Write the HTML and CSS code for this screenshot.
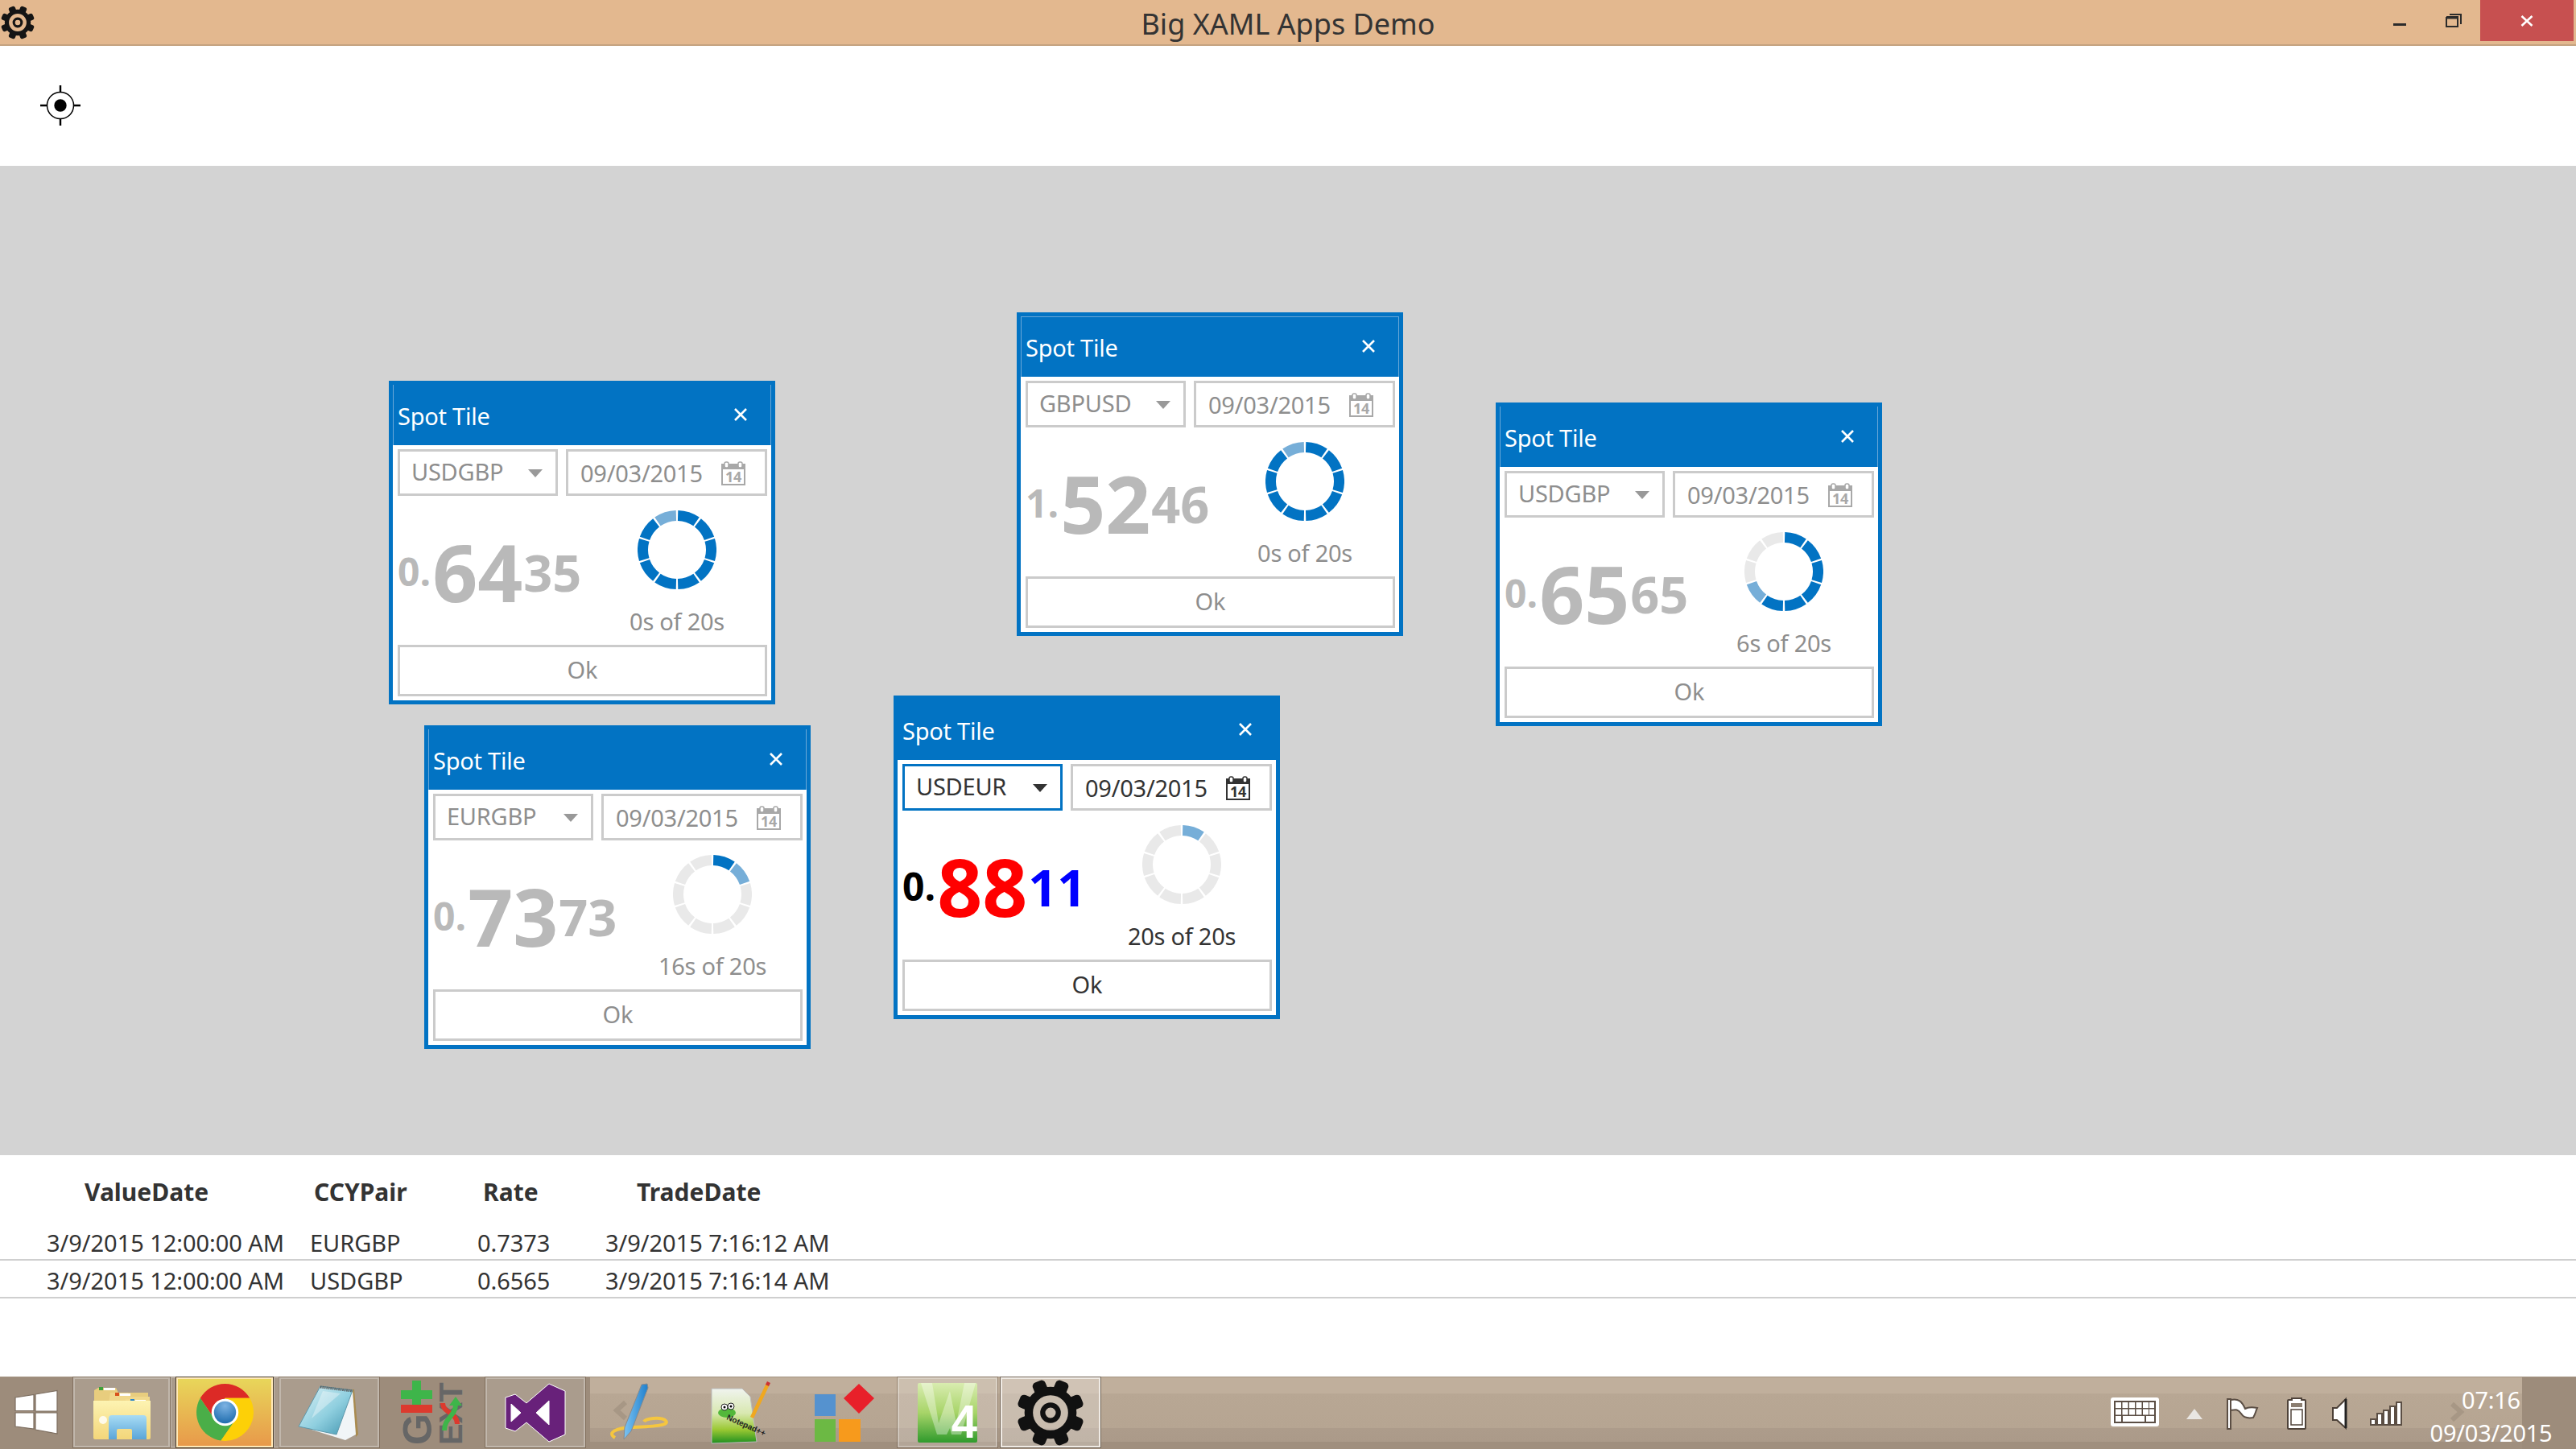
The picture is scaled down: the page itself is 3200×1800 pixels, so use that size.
FILE: index.html
```html
<!DOCTYPE html>
<html lang="en">
<head>
<meta charset="utf-8">
<title>Big XAML Apps Demo</title>
<link rel="stylesheet" href="styles.css">
</head>
<body>
<svg class="defs" aria-hidden="true">
  <defs>
    <circle id="seg" r="42.5" fill="none" stroke="currentColor" stroke-width="13" pathLength="360" stroke-dasharray="33 327" transform="rotate(-88.5)"/>
    <symbol id="gear" viewBox="-20 -20 40 40">
      <g fill="currentColor">
        <rect x="-4" y="-20" width="8" height="9" rx="2.4" transform="rotate(22.5)"/>
        <rect x="-4" y="-20" width="8" height="9" rx="2.4" transform="rotate(67.5)"/>
        <rect x="-4" y="-20" width="8" height="9" rx="2.4" transform="rotate(112.5)"/>
        <rect x="-4" y="-20" width="8" height="9" rx="2.4" transform="rotate(157.5)"/>
        <rect x="-4" y="-20" width="8" height="9" rx="2.4" transform="rotate(202.5)"/>
        <rect x="-4" y="-20" width="8" height="9" rx="2.4" transform="rotate(247.5)"/>
        <rect x="-4" y="-20" width="8" height="9" rx="2.4" transform="rotate(292.5)"/>
        <rect x="-4" y="-20" width="8" height="9" rx="2.4" transform="rotate(337.5)"/>
      </g>
      <circle r="12.9" fill="none" stroke="currentColor" stroke-width="5"/>
      <circle r="4.6" fill="none" stroke="currentColor" stroke-width="3"/>
    </symbol>
  </defs>
</svg>

<div class="app">
  <header class="titlebar">
    <svg class="titlegear"><use href="#gear"/></svg>
    <span class="apptitle">Big XAML Apps Demo</span>
    <div class="winctl">
      <svg class="winbtn" width="66" height="51" viewBox="0 0 66 51"><rect x="24" y="29" width="16" height="3" fill="#2b2b2b"/></svg>
      <svg class="winbtn" width="66" height="51" viewBox="0 0 66 51"><path d="M24 22h14v11h-14zM28 18h14v12" fill="none" stroke="#2b2b2b" stroke-width="2"/><rect x="24" y="20" width="15" height="3.5" fill="#2b2b2b"/></svg>
      <div class="closebtn"><svg width="16" height="14" viewBox="0 0 16 14"><path d="M1.5 1l13 12M14.5 1l-13 12" stroke="#fff" stroke-width="2.6"/></svg></div>
    </div>
  </header>

  <div class="toolbar">
    <svg class="target" width="50" height="50" viewBox="0 0 50 50">
      <circle cx="25" cy="25" r="16.5" fill="none" stroke="#000" stroke-width="1.5"/>
      <circle cx="25" cy="25" r="7.7" fill="#000"/>
      <path d="M25 0v8.5M25 41.5v8.5M0 25h8.5M41.5 25h8.5" stroke="#000" stroke-width="2.4"/>
    </svg>
  </div>

  <main class="canvas">
    <section class="tile off pos1">
      <div class="head"><span class="tiletitle">Spot Tile</span><svg class="x" viewBox="0 0 16 16"><path d="M1 1l14 14M15 1l-14 14"/></svg></div>
      <div class="inputs">
        <div class="combo"><span>USDGBP</span><i class="caret"></i></div>
        <div class="date"><span>09/03/2015</span><svg class="calicon" viewBox="0 0 30 30"><rect x="1" y="4" width="28" height="25" fill="none" stroke="currentColor" stroke-width="2"/><rect x="1" y="4" width="28" height="6" fill="currentColor"/><rect x="4" y="1" width="5" height="7" rx="2" fill="#fff" stroke="currentColor" stroke-width="1.5"/><rect x="21" y="1" width="5" height="7" rx="2" fill="#fff" stroke="currentColor" stroke-width="1.5"/><text x="15" y="26" text-anchor="middle" class="caltext">14</text></svg></div>
      </div>
      <div class="mid">
        <div class="price"><span class="pre">0.</span><span class="big">64</span><span class="pip">35</span></div>
        <div class="timer">
          <svg class="ring" viewBox="-49 -49 98 98">
            <use href="#seg" class="b" transform="rotate(0)"/><use href="#seg" class="b" transform="rotate(36)"/><use href="#seg" class="b" transform="rotate(72)"/><use href="#seg" class="b" transform="rotate(108)"/><use href="#seg" class="b" transform="rotate(144)"/><use href="#seg" class="b" transform="rotate(180)"/><use href="#seg" class="b" transform="rotate(216)"/><use href="#seg" class="b" transform="rotate(252)"/><use href="#seg" class="b" transform="rotate(288)"/><use href="#seg" class="p" transform="rotate(324)"/>
          </svg>
          <span class="count">0s of 20s</span>
        </div>
      </div>
      <div class="ok">Ok</div>
    </section>

    <section class="tile off pos2">
      <div class="head headtop"><span class="tiletitle">Spot Tile</span><svg class="x" viewBox="0 0 16 16"><path d="M1 1l14 14M15 1l-14 14"/></svg></div>
      <div class="inputs">
        <div class="combo"><span>GBPUSD</span><i class="caret"></i></div>
        <div class="date"><span>09/03/2015</span><svg class="calicon" viewBox="0 0 30 30"><rect x="1" y="4" width="28" height="25" fill="none" stroke="currentColor" stroke-width="2"/><rect x="1" y="4" width="28" height="6" fill="currentColor"/><rect x="4" y="1" width="5" height="7" rx="2" fill="#fff" stroke="currentColor" stroke-width="1.5"/><rect x="21" y="1" width="5" height="7" rx="2" fill="#fff" stroke="currentColor" stroke-width="1.5"/><text x="15" y="26" text-anchor="middle" class="caltext">14</text></svg></div>
      </div>
      <div class="mid">
        <div class="price"><span class="pre">1.</span><span class="big">52</span><span class="pip">46</span></div>
        <div class="timer">
          <svg class="ring" viewBox="-49 -49 98 98">
            <use href="#seg" class="b" transform="rotate(0)"/><use href="#seg" class="b" transform="rotate(36)"/><use href="#seg" class="b" transform="rotate(72)"/><use href="#seg" class="b" transform="rotate(108)"/><use href="#seg" class="b" transform="rotate(144)"/><use href="#seg" class="b" transform="rotate(180)"/><use href="#seg" class="b" transform="rotate(216)"/><use href="#seg" class="b" transform="rotate(252)"/><use href="#seg" class="b" transform="rotate(288)"/><use href="#seg" class="p" transform="rotate(324)"/>
          </svg>
          <span class="count">0s of 20s</span>
        </div>
      </div>
      <div class="ok">Ok</div>
    </section>

    <section class="tile off pos3">
      <div class="head"><span class="tiletitle">Spot Tile</span><svg class="x" viewBox="0 0 16 16"><path d="M1 1l14 14M15 1l-14 14"/></svg></div>
      <div class="inputs">
        <div class="combo"><span>USDGBP</span><i class="caret"></i></div>
        <div class="date"><span>09/03/2015</span><svg class="calicon" viewBox="0 0 30 30"><rect x="1" y="4" width="28" height="25" fill="none" stroke="currentColor" stroke-width="2"/><rect x="1" y="4" width="28" height="6" fill="currentColor"/><rect x="4" y="1" width="5" height="7" rx="2" fill="#fff" stroke="currentColor" stroke-width="1.5"/><rect x="21" y="1" width="5" height="7" rx="2" fill="#fff" stroke="currentColor" stroke-width="1.5"/><text x="15" y="26" text-anchor="middle" class="caltext">14</text></svg></div>
      </div>
      <div class="mid">
        <div class="price"><span class="pre">0.</span><span class="big">65</span><span class="pip">65</span></div>
        <div class="timer">
          <svg class="ring" viewBox="-49 -49 98 98">
            <use href="#seg" class="b" transform="rotate(0)"/><use href="#seg" class="b" transform="rotate(36)"/><use href="#seg" class="b" transform="rotate(72)"/><use href="#seg" class="b" transform="rotate(108)"/><use href="#seg" class="b" transform="rotate(144)"/><use href="#seg" class="b" transform="rotate(180)"/><use href="#seg" class="p" transform="rotate(216)"/><use href="#seg" class="g" transform="rotate(252)"/><use href="#seg" class="g" transform="rotate(288)"/><use href="#seg" class="g" transform="rotate(324)"/>
          </svg>
          <span class="count">6s of 20s</span>
        </div>
      </div>
      <div class="ok">Ok</div>
    </section>

    <section class="tile off pos4">
      <div class="head"><span class="tiletitle">Spot Tile</span><svg class="x" viewBox="0 0 16 16"><path d="M1 1l14 14M15 1l-14 14"/></svg></div>
      <div class="inputs">
        <div class="combo"><span>EURGBP</span><i class="caret"></i></div>
        <div class="date"><span>09/03/2015</span><svg class="calicon" viewBox="0 0 30 30"><rect x="1" y="4" width="28" height="25" fill="none" stroke="currentColor" stroke-width="2"/><rect x="1" y="4" width="28" height="6" fill="currentColor"/><rect x="4" y="1" width="5" height="7" rx="2" fill="#fff" stroke="currentColor" stroke-width="1.5"/><rect x="21" y="1" width="5" height="7" rx="2" fill="#fff" stroke="currentColor" stroke-width="1.5"/><text x="15" y="26" text-anchor="middle" class="caltext">14</text></svg></div>
      </div>
      <div class="mid">
        <div class="price"><span class="pre">0.</span><span class="big">73</span><span class="pip">73</span></div>
        <div class="timer">
          <svg class="ring" viewBox="-49 -49 98 98">
            <use href="#seg" class="b" transform="rotate(0)"/><use href="#seg" class="p" transform="rotate(36)"/><use href="#seg" class="g" transform="rotate(72)"/><use href="#seg" class="g" transform="rotate(108)"/><use href="#seg" class="g" transform="rotate(144)"/><use href="#seg" class="g" transform="rotate(180)"/><use href="#seg" class="g" transform="rotate(216)"/><use href="#seg" class="g" transform="rotate(252)"/><use href="#seg" class="g" transform="rotate(288)"/><use href="#seg" class="g" transform="rotate(324)"/>
          </svg>
          <span class="count">16s of 20s</span>
        </div>
      </div>
      <div class="ok">Ok</div>
    </section>

    <section class="tile on pos5">
      <div class="head"><span class="tiletitle">Spot Tile</span><svg class="x" viewBox="0 0 16 16"><path d="M1 1l14 14M15 1l-14 14"/></svg></div>
      <div class="inputs">
        <div class="combo focus"><span>USDEUR</span><i class="caret"></i></div>
        <div class="date"><span>09/03/2015</span><svg class="calicon" viewBox="0 0 30 30"><rect x="1" y="4" width="28" height="25" fill="none" stroke="currentColor" stroke-width="2"/><rect x="1" y="4" width="28" height="6" fill="currentColor"/><rect x="4" y="1" width="5" height="7" rx="2" fill="#fff" stroke="currentColor" stroke-width="1.5"/><rect x="21" y="1" width="5" height="7" rx="2" fill="#fff" stroke="currentColor" stroke-width="1.5"/><text x="15" y="26" text-anchor="middle" class="caltext">14</text></svg></div>
      </div>
      <div class="mid">
        <div class="price"><span class="pre">0.</span><span class="big">88</span><span class="pip">11</span></div>
        <div class="timer">
          <svg class="ring" viewBox="-49 -49 98 98">
            <use href="#seg" class="p" transform="rotate(0)"/><use href="#seg" class="g" transform="rotate(36)"/><use href="#seg" class="g" transform="rotate(72)"/><use href="#seg" class="g" transform="rotate(108)"/><use href="#seg" class="g" transform="rotate(144)"/><use href="#seg" class="g" transform="rotate(180)"/><use href="#seg" class="g" transform="rotate(216)"/><use href="#seg" class="g" transform="rotate(252)"/><use href="#seg" class="g" transform="rotate(288)"/><use href="#seg" class="g" transform="rotate(324)"/>
          </svg>
          <span class="count">20s of 20s</span>
        </div>
      </div>
      <div class="ok">Ok</div>
    </section>
  </main>

  <section class="blotter">
    <div class="thead"><span>ValueDate</span><span>CCYPair</span><span>Rate</span><span>TradeDate</span></div>
    <div class="trow"><span>3/9/2015 12:00:00 AM</span><span>EURGBP</span><span>0.7373</span><span>3/9/2015 7:16:12 AM</span></div>
    <div class="trow"><span>3/9/2015 12:00:00 AM</span><span>USDGBP</span><span>0.6565</span><span>3/9/2015 7:16:14 AM</span></div>
  </section>

  <footer class="taskbar">
    <svg class="wallchev left" width="18" height="22" viewBox="0 0 18 22"><path d="M15 1L4 11l11 10" fill="none" stroke="#a79785" stroke-width="6"/></svg>
    <svg class="wallchev right" width="18" height="22" viewBox="0 0 18 22"><path d="M3 1l11 10L3 21" fill="none" stroke="#a79785" stroke-width="6"/></svg>
    <div class="start">
      <svg width="56" height="56" viewBox="0 0 56 56">
        <g fill="#fff" stroke="#7d6e60" stroke-width="1.2"><path d="M2 10l23-3.5v20H2z"/><path d="M27 6l27-4.5v25.500H27z"/><path d="M2 29h23v20L2 46z"/><path d="M27 29h27v26l-27-5z"/></g>
      </svg>
    </div>
    <div class="slot stack"><div class="btn">
      <svg width="71" height="69" viewBox="0 0 71 69">
        <defs>
          <linearGradient id="fold" x1="0" y1="0" x2="0" y2="1"><stop offset="0" stop-color="#fdf3b2"/><stop offset="1" stop-color="#f3d67a"/></linearGradient>
          <linearGradient id="lib" x1="0" y1="0" x2="0" y2="1"><stop offset="0" stop-color="#a8dcf5"/><stop offset="1" stop-color="#5aa5d8"/></linearGradient>
        </defs>
        <path d="M6 4h22l3 6h37v10H1V7z" fill="#e8cd7e"/>
        <rect x="7" y="3" width="5" height="4" fill="#3ea13a"/><rect x="13" y="4" width="14" height="3" fill="#fff"/>
        <path d="M21 10h22l3 5h24v8H19z" fill="#f0d88c"/>
        <rect x="27" y="10" width="5" height="4" fill="#d9521c"/><rect x="33" y="11" width="13" height="3" fill="#fff"/>
        <path d="M40 18h23l8 4v3H39z" fill="#f3dc90"/>
        <rect x="46" y="18" width="5" height="4" fill="#2b86c9"/><rect x="52" y="19" width="13" height="3" fill="#fff"/>
        <path d="M0 20h71v46a2 2 0 0 1-2 2H2a2 2 0 0 1-2-2z" fill="url(#fold)"/>
        <path d="M21 42a4 4 0 0 1 4-4h39a4 4 0 0 1 4 4v26H50V57a2 2 0 0 0-2-2H33a2 2 0 0 0-2 2v11H21z" fill="url(#lib)" transform="translate(-2 0)"/>
        <circle cx="12" cy="44" r="5" fill="#fff" opacity=".8"/>
      </svg>
    </div></div>
    <div class="slot stack"><div class="btn hot">
      <svg width="71" height="71" viewBox="0 0 70 70">
        <defs><radialGradient id="cb" cx=".5" cy=".2" r=".9"><stop offset="0" stop-color="#7db3e3"/><stop offset="1" stop-color="#1565a8"/></radialGradient></defs>
        <path d="M4.7 17.5A35 35 0 0 1 65.3 17.5H35L20 40z" fill="#dc2a26"/>
        <path d="M4.7 17.5A35 35 0 0 0 30 69.6L45 48 20 40z" fill="#4aae48"/>
        <path d="M65.3 17.5A35 35 0 0 1 30 69.6L45 48 50 35 35 17.5z" fill="#fdd007"/>
        <circle cx="35" cy="35" r="16.5" fill="#fff"/>
        <circle cx="35" cy="35" r="13.5" fill="url(#cb)"/>
      </svg>
    </div></div>
    <div class="slot"><div class="btn">
      <svg width="76" height="70" viewBox="0 0 76 70">
        <defs><linearGradient id="pad" x1="0" y1="0" x2="1" y2="1"><stop offset="0" stop-color="#dff2f6"/><stop offset=".55" stop-color="#8fcfdf"/><stop offset="1" stop-color="#3f93ae"/></linearGradient></defs>
        <path d="M66 6l3 0 5 56-3 3z" fill="#a98b50"/>
        <path d="M16 56l51-49 4 55-13 7z" fill="#f1f5f7"/>
        <path d="M27 2L67 7 47 62 0 52z" fill="url(#pad)" stroke="#5d97aa"/>
        <path d="M27 3L67 8" stroke="#555" stroke-width="3" stroke-dasharray="1.5 1"/>
        <path d="M30 8L52 11 16 42z" fill="#fff" opacity=".35"/>
      </svg>
    </div></div>
    <div class="slot"><div class="btn plain">
      <svg width="78" height="80" viewBox="0 0 78 80">
        <path d="M14 0h11v12h14v11H25v15H14V23H0V12h14z" fill="#3eb54a"/>
        <rect x="0" y="30" width="39" height="10" fill="#dc3a2e"/>
        <text class="gitg" transform="translate(38 80) rotate(-90)">G</text>
        <text class="gitx" transform="translate(76 80) rotate(-90)">EXT</text>
        <path d="M52 28c0 12 18 12 18 26" fill="none" stroke="#dc3a2e" stroke-width="6"/>
        <path d="M54 62C54 46 68 44 68 30" fill="none" stroke="#3eb54a" stroke-width="6"/>
        <path d="M60 31h16l-8-11z" fill="#3eb54a"/>
      </svg>
    </div></div>
    <div class="slot"><div class="btn">
      <svg width="74" height="72" viewBox="0 0 74 72"><path d="M54 0l20 9v54l-20 9-28-24-14 11L0 55V17l12-4 14 11zM54 21L38 36l16 15zM7 25v22l12-11z" fill="#68217a" fill-rule="evenodd" stroke="#fff" stroke-width="1"/><path d="M7 25v22l12-11zM54 21L38 36l16 15z" fill="#fff"/></svg>
    </div></div>
    <div class="slot"><div class="btn plain">
      <svg width="74" height="74" viewBox="0 0 74 74">
        <defs><linearGradient id="pen" x1="0" y1="0" x2="1" y2="0"><stop offset="0" stop-color="#7cc3f2"/><stop offset="1" stop-color="#1f7fcc"/></linearGradient></defs>
        <path d="M8 68C-2 62 8 56 30 55 60 54 78 52 70 46 64 42 46 44 44 48" fill="none" stroke="#f5c63f" stroke-width="4"/>
        <path d="M19 70l1-15L41 2l7-1 1 5-21 54z" fill="url(#pen)" stroke="#8a8a8a" stroke-width="1"/>
      </svg>
    </div></div>
    <div class="slot"><div class="btn plain">
      <svg width="74" height="76" viewBox="0 0 74 76">
        <defs><linearGradient id="npp" x1="0" y1="0" x2="0" y2="1"><stop offset="0" stop-color="#f0f4ef"/><stop offset=".45" stop-color="#d8e8b0"/><stop offset=".75" stop-color="#9ac832"/><stop offset="1" stop-color="#1e8f20"/></linearGradient></defs>
        <path d="M0 8h38l10 10 8 56-56 2z" fill="url(#npp)" stroke="#bbb"/>
        <ellipse cx="19" cy="38" rx="11" ry="6" fill="#52b83a"/>
        <circle cx="16" cy="31" r="4" fill="#fff" stroke="#222"/><circle cx="24" cy="30" r="4" fill="#fff" stroke="#222"/>
        <circle cx="16" cy="31" r="1.5"/><circle cx="24" cy="30" r="1.5"/>
        <text class="npptext" transform="translate(18 46) rotate(24)">Notepad++</text>
        <path d="M50 44L70 2" stroke="#f0a820" stroke-width="4.5"/><path d="M69 4l2-4" stroke="#c33" stroke-width="4.5"/>
      </svg>
    </div></div>
    <div class="slot"><div class="btn plain">
      <svg width="74" height="72" viewBox="0 0 74 72">
        <rect x="0" y="13" width="26" height="27" fill="#5592cf"/>
        <rect x="0" y="44" width="26" height="28" fill="#6cb944"/>
        <rect x="30" y="44" width="27" height="28" fill="#f79a1c"/>
        <path d="M55 0l19 18-19 19-19-19z" fill="#e8202a"/>
      </svg>
    </div></div>
    <div class="slot"><div class="btn lite">
      <svg width="74" height="74" viewBox="0 0 74 74">
        <defs><linearGradient id="w4" x1="0" y1="0" x2="0" y2="1"><stop offset="0" stop-color="#d9ecb0"/><stop offset=".5" stop-color="#a7d468"/><stop offset="1" stop-color="#2f9a2c"/></linearGradient></defs>
        <rect width="74" height="74" rx="2" fill="url(#w4)"/>
        <path d="M4 0h14l8 50L40 10l8 40L58 0h14L54 64H42l-2-8-4 8H24z" fill="#fff" opacity=".35"/>
        <text class="w4num" x="74" y="68" text-anchor="end">4</text>
      </svg>
    </div></div>
    <div class="slot"><div class="btn gearbtn">
      <svg class="biggear"><use href="#gear"/></svg>
    </div></div>

    <div class="tray">
      <svg class="tk" width="60" height="36" viewBox="0 0 60 36"><rect width="60" height="36" rx="3" fill="#fff"/><rect x="4" y="4" width="52" height="28" fill="#5b4e44"/><path fill="#fff" d="M6 6h7v7H6zM14.5 6h7v7h-7zM23 6h7v7h-7zM31.5 6h7v7h-7zM40 6h7v7h-7zM48 6h6v7h-6zM6 14.5h7v7H6zM14.5 14.5h7v7h-7zM23 14.5h7v7h-7zM31.5 14.5h7v7h-7zM40 14.5h7v7h-7zM48 14.5h6v7h-6zM6 23h7v7H6zM15 23h27v7H15zM44 23h10v7H44z"/></svg>
      <svg class="tk ml-tri" width="20" height="13" viewBox="0 0 20 13"><path d="M10 0l10 13H0z" fill="#e9e6e2"/></svg>
      <svg class="tk ml-flag" width="40" height="40" viewBox="0 0 40 40"><path d="M2 2v37h4V2z" fill="#fff" stroke="#5b4e44" stroke-width="2"/><path d="M6 3c10-2 14 2 18 11 4-2 10-2 15-1-2 4-2 7-5 12-6 1-12 0-15-5-4-6-7-5-13-4z" fill="#fff" stroke="#5b4e44" stroke-width="2"/></svg>
      <svg class="tk ml-bat" width="24" height="40" viewBox="0 0 24 40"><path d="M6 1h12v2h4a1 1 0 0 1 1 1v34a1 1 0 0 1-1 1H2a1 1 0 0 1-1-1V4a1 1 0 0 1 1-1h4z" fill="#fff" stroke="#4f433a" stroke-width="2"/><rect x="5" y="7" width="14" height="5" fill="#8a7d70"/><rect x="5" y="15" width="14" height="19" fill="#fff" stroke="#4f433a" stroke-width="1.5"/></svg>
      <svg class="tk ml-spk" width="20" height="40" viewBox="0 0 20 40"><path d="M18 2v36l-11-10H2V13h5z" fill="#fff" stroke="#4c4037" stroke-width="2"/><path d="M18 2v36" stroke="#222" stroke-width="3"/></svg>
      <svg class="tk ml-sig" width="40" height="30" viewBox="0 0 40 30"><path d="M1 22h6v7H1zM9 15h6v14H9zM17 11h6v18h-6zM25 6h6v23h-6zM33 1h6v28h-6z" fill="#fff" stroke="#5b4e44" stroke-width="2"/></svg>
      <div class="clock"><span>07:16</span><span>09/03/2015</span></div>
    </div>
  </footer>
</div>
</body>
</html>
```

FILE: styles.css
```css
* { box-sizing: border-box; }
html, body { margin: 0; padding: 0; }
body { font-family: "Noto Sans", "Open Sans", sans-serif; color: #333; background: #fff; }
.defs { position: absolute; width: 0; height: 0; overflow: hidden; }
.caltext { font: 700 18px "Noto Sans", sans-serif; fill: currentColor; }

.app { width: 3200px; height: 1800px; display: flex; flex-direction: column; overflow: hidden; }

/* Title bar */
.titlebar { flex: 0 0 57px; background: #e3b88f; border-bottom: 2px solid #c4a27f; position: relative; display: flex; justify-content: center; align-items: center; }
.titlegear { position: absolute; left: 1px; top: 7px; width: 42px; height: 42px; color: #151515; }
.apptitle { font-size: 36px; line-height: 55px; color: #333; position: relative; top: 2px; }
.winctl { position: absolute; right: 3px; top: 0; display: flex; }
.winbtn { display: block; }
.closebtn { width: 116px; height: 51px; background: #c75050; display: flex; align-items: center; justify-content: center; }

/* Toolbar */
.toolbar { flex: 0 0 149px; background: #fff; padding: 49px 0 0 50px; }
.target { display: block; }

/* Canvas */
.canvas { flex: 1 1 auto; background: #d3d3d3; position: relative; }
.tile { position: absolute; width: 480px; height: 402px; border: 5px solid #0273c3; background: #fff; display: flex; flex-direction: column; }
.pos1 { left: 483px; top: 267px; }
.pos2 { left: 1263px; top: 182px; }
.pos3 { left: 1858px; top: 294px; }
.pos4 { left: 527px; top: 695px; }
.pos5 { left: 1110px; top: 658px; }

.head { flex: 0 0 75px; background: #0273c3; position: relative; padding: 19px 0 0 6px; }
.off .head { box-shadow: inset 1px 0 0 #6aa8d8, inset -1px 0 0 #6aa8d8; }
.off .headtop { box-shadow: inset 1px 1px 0 #6aa8d8, inset -1px 0 0 #6aa8d8; }
.tiletitle { display: block; font-size: 29px; line-height: 40px; color: #fff; letter-spacing: -.25px; }
.x { position: absolute; right: 30px; top: 29px; width: 16px; height: 16px; fill: none; stroke: #fff; stroke-width: 2.6; }

.inputs { display: flex; gap: 10px; padding: 5px 5px 0 6px; }
.combo, .date { height: 58px; border: 3px solid #cbcbcb; display: flex; align-items: center; font-size: 29px; letter-spacing: -.25px; position: relative; }
.combo { flex: 0 0 199px; padding-left: 14px; }
.date { flex: 0 0 250px; padding-left: 15px; }
.combo span { position: relative; top: -2px; }
.focus { border-color: #0273c3; }
.caret { position: absolute; left: 159px; top: 22px; width: 0; height: 0; border-left: 9px solid transparent; border-right: 9px solid transparent; border-top: 10px solid currentColor; }
.calicon { position: absolute; right: 24px; top: 12px; width: 30px; height: 30px; }

.mid { flex: 0 0 185px; display: flex; }
.price { flex: 0 0 235px; display: flex; align-items: flex-start; padding-left: 6px; font-family: "Open Sans", "Noto Sans", sans-serif; font-weight: 700; }
.pre { font-size: 48px; line-height: 48px; margin-top: 70px; }
.big { font-size: 98px; line-height: 98px; margin-top: 45px; margin-left: 2px; }
.pip { font-size: 63px; line-height: 63px; margin-top: 63px; margin-left: 1px; }

.timer { flex: 0 0 236px; display: flex; flex-direction: column; align-items: center; padding-top: 18px; }
.ring { width: 98px; height: 98px; display: block; }
.count { font-size: 29px; line-height: 40px; margin-top: 20px; letter-spacing: -.25px; }
.b { color: #0273c3; }
.p { color: #76aed8; }
.g { color: #e9e9e9; }

.ok { height: 64px; margin: 0 5px 0 6px; padding-bottom: 4px; border: 3px solid #cbcbcb; display: flex; align-items: center; justify-content: center; font-size: 29px; }

.off .combo, .off .date, .off .count, .off .ok { color: #8e8e8e; }
.off .price { color: #b9b9b9; }
.off .calicon { color: #a8a8a8; }
.off .caret { color: #999; }
.on .combo, .on .date, .on .count, .on .ok { color: #333; }
.on .pre { color: #000; }
.on .big { color: #f00; }
.on .pip { color: #00f; }

/* Blotter */
.blotter { flex: 0 0 275px; background: #fff; }
.thead { height: 84px; display: grid; grid-template-columns: 285px 210px 191px 1fr; padding: 26px 0 0 105px; font-size: 30px; line-height: 40px; font-weight: 700; }
.trow { height: 47px; display: grid; grid-template-columns: 327px 208px 159px 1fr; padding: 6px 0 0 58px; border-bottom: 2px solid #cfcfcf; font-size: 29px; line-height: 38px; letter-spacing: -.05px; }

/* Taskbar */
.taskbar { flex: 0 0 88px; display: flex; position: relative; background: linear-gradient(180deg, #c0af9c 0, #c0af9c 20px, #b8a794 20px, #b6a592 63px, #ad9c8b 63px, #ab9a89 80px, #a08f7e 80px) 733px 0 / 2400px 100% no-repeat, #9d8c7b; border-top: 1px solid #a39381; }
.taskbar svg { overflow: visible; }
.wallchev { position: absolute; top: 30px; }
.wallchev.left { left: 762px; }
.wallchev.right { left: 3043px; top: 32px; }
.start { flex: 0 0 91px; padding: 15px 0 0 17px; }
.slot { flex: 0 0 128px; display: flex; height: 87px; }
.btn { width: 124px; display: flex; align-items: center; justify-content: center; border: 2px solid rgba(255, 255, 255, .28); background: rgba(255, 255, 255, .14); box-shadow: 0 0 0 1px rgba(80, 60, 40, .35); position: relative; }
.stack .btn { width: 120px; }
.stack::after { content: ""; width: 5px; margin-left: 1px; border: 1px solid rgba(255, 255, 255, .3); background: rgba(255, 255, 255, .12); }
.btn.plain { background: none; border-color: transparent; box-shadow: none; }
.btn.hot { background: linear-gradient(180deg, #e8d65a, #e8994a); border-color: #ffe9b8; box-shadow: 0 0 0 1px #4a3d2d; }
.btn.lite { background: rgba(255, 255, 255, .2); }
.btn.gearbtn { background: rgba(255, 255, 255, .26); border-color: #efeae4; box-shadow: 0 0 0 1px #75685a; }
.biggear { width: 84px; height: 84px; color: #111; }
.gitg { font: 700 50px "Liberation Sans", sans-serif; fill: #666; }
.gitx { font: 700 40px "Liberation Sans", sans-serif; fill: #666; }
.npptext { font: 700 10px "Liberation Sans", sans-serif; fill: #222; }
.w4num { font: 700 58px "Liberation Sans", sans-serif; fill: #fff; }

.tray { margin-left: auto; display: flex; align-items: flex-start; padding-right: 30px; }
.tk { display: block; margin-top: 25px; flex: none; }
.ml-tri { margin-left: 34px; margin-top: 39px; }
.ml-flag { margin-left: 29px; }
.ml-bat { margin-left: 36px; }
.ml-spk { margin-left: 31px; }
.ml-sig { margin-left: 28px; margin-top: 30px; }
.clock { margin-left: 35px; width: 151px; display: flex; flex-direction: column; align-items: center; color: #fff; font-size: 29px; line-height: 41px; letter-spacing: -.25px; padding-top: 7px; }
```
